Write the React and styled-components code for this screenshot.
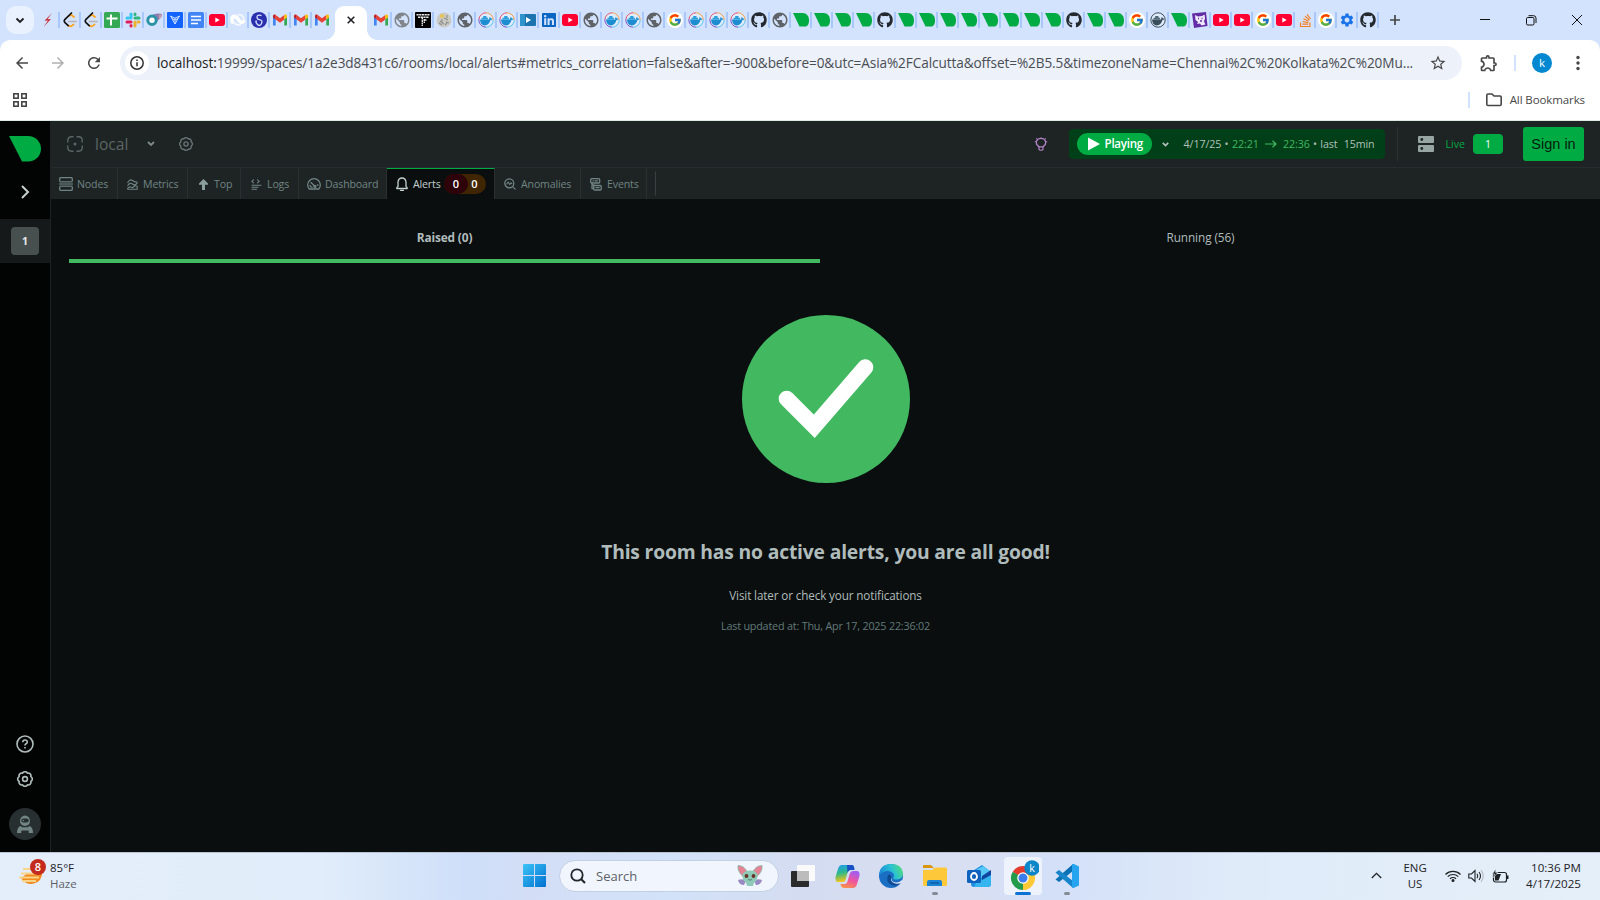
import React from 'react';
import styled, { createGlobalStyle, css } from 'styled-components';
import { FaGithub, FaLinkedin, FaStackOverflow } from 'react-icons/fa';
import { FcGoogle } from 'react-icons/fc';
import { MdSettings, MdOutlineExtension, MdStarBorder, MdRefresh, MdArrowBack, MdArrowForward, MdPublic } from 'react-icons/md';

const Global = createGlobalStyle`
  * { box-sizing: border-box; }
  body { margin: 0; overflow: hidden; font-family: "Open Sans", "Noto Sans", sans-serif; }
  svg { display: block; flex: none; }
`;

const Screen = styled.div`
  width: 1600px; height: 900px; display: flex; flex-direction: column; background: #fff;
`;

const Label = styled.span`
  white-space: nowrap;
  font-size: ${p => p.$size || 11}px;
  font-weight: ${p => p.$weight || 400};
  color: ${p => p.$color || 'inherit'};
  letter-spacing: ${p => p.$track || 0}px;
  margin-left: ${p => p.$ml || 0}px;
  line-height: ${p => p.$lh || 16}px;
`;

/* ---------- browser chrome ---------- */
const TabStrip = styled.div`
  height: 40px; background: #d3e3fd; display: flex; align-items: center; padding-left: 6px; flex: none;
`;
const TabSearch = styled.div`
  width: 28px; height: 28px; border-radius: 10px; background: #e9f1fe; margin-right: 6px;
  display: flex; align-items: center; justify-content: center;
`;
const TabSlot = styled.div`
  display: flex; align-items: center; width: ${p => (p.$first ? 22 : 21)}px; height: 16px; flex: none;
  &::after { content: ''; width: 2px; height: 16px; margin-left: ${p => (p.$first ? 2 : 1)}px; background: ${p => (p.$last ? 'transparent' : '#a8c7fa')}; }
`;
const Fav = styled.div`
  width: 16px; height: 16px; flex: none; display: flex; align-items: center; justify-content: center;
  border-radius: ${p => p.$r || 0}; background: ${p => p.$bg || 'transparent'}; color: ${p => p.$c || '#24292f'};
`;
const ActiveTab = styled.div`
  width: 32px; height: 34px; margin: 6px 6px 0 0; background: #fff; border-radius: 9px 9px 0 0; position: relative;
  display: flex; align-items: center; justify-content: center; padding-bottom: 6px; flex: none;
  &::before, &::after { content: ''; position: absolute; bottom: 0; width: 10px; height: 10px; }
  &::before { left: -10px; background: radial-gradient(circle at 0 0, transparent 9.5px, #fff 10px); }
  &::after { right: -10px; background: radial-gradient(circle at 100% 0, transparent 9.5px, #fff 10px); }
`;
const NewTab = styled.div`
  margin-left: 9px; color: #474747;
`;
const WinButtons = styled.div`
  margin-left: auto; display: flex; align-items: center; gap: 30px; padding-right: 18px;
`;
const Toolbar = styled.div`
  height: 46px; background: #d3e3fd; flex: none;
`;
const ToolbarInner = styled.div`
  height: 46px; background: #fff; border-radius: 10px 10px 0 0; display: flex; align-items: center; padding-left: 12px; color: #474747;
`;
const NavIcon = styled.div`
  width: 20px; height: 20px; margin-right: 16px; color: ${p => (p.$dim ? '#b0b0b0' : '#474747')};
  display: flex; align-items: center; justify-content: center; flex: none;
`;
const Omnibox = styled.div`
  width: 1342px; height: 34px; border-radius: 17px; background: #ecf1fa; display: flex; align-items: center; padding: 0 15px 0 5px; flex: none;
`;
const InfoDot = styled.div`
  width: 24px; height: 24px; border-radius: 50%; background: #fff; display: flex; align-items: center; justify-content: center; flex: none;
`;
const Url = styled.div`
  margin-left: 8px; flex: 1; min-width: 0; font-size: 13.6px; letter-spacing: -0.09px; color: #4a4d52; white-space: nowrap; line-height: 20px;
  b { font-weight: 400; color: #1f1f1f; }
`;
const VBar = styled.div`
  width: ${p => p.$w || 2}px; height: ${p => p.$h || 16}px; background: ${p => p.$c || '#d3e3fd'}; margin: 0 ${p => p.$mr || 0}px 0 ${p => p.$ml || 0}px; flex: none;
`;
const ChromeTail = styled.div`
  display: flex; align-items: center; margin-left: 17px;
`;
const Avatar = styled.div`
  width: 20px; height: 20px; border-radius: 50%; background: #0288d1; color: #fff; font-size: 11.5px; line-height: 19px; text-align: center; margin: 0 16px 0 16px;
`;
const Bookmarks = styled.div`
  height: 35px; flex: none; background: #fff; display: flex; align-items: center; padding: 0 15px 7px 13px; border-bottom: 1px solid #dfe9e4;
`;
const BookmarksRight = styled.div`
  margin-left: auto; display: flex; align-items: center; color: #474747;
`;

/* ---------- application ---------- */
const Page = styled.div`
  flex: 1; display: flex; min-height: 0;
`;
const Sidebar = styled.div`
  width: 51px; background: #020404; border-right: 1px solid #1d2223; display: flex; flex-direction: column; align-items: center;
`;
const SpaceRow = styled.div`
  width: 50px; height: 44px; background: #15191a; display: flex; align-items: center; justify-content: center; margin-top: 18px;
`;
const SpaceBox = styled.div`
  width: 28px; height: 28px; border-radius: 4px; background: #48504f; color: #e4ebeb; font-size: 10.5px; font-weight: 700; line-height: 28px; text-align: center;
`;
const SideFoot = styled.div`
  margin-top: auto; display: flex; flex-direction: column; align-items: center; padding-bottom: 12px;
`;
const FootCog = styled.div`
  color: #b0bcbb; margin-top: 18px;
`;
const UserDot = styled.div`
  width: 32px; height: 32px; border-radius: 50%; background: #282f30; display: flex; align-items: center; justify-content: center; margin-top: 21px;
`;
const Main = styled.div`
  flex: 1; background: #0a0e0f; display: flex; flex-direction: column;
`;
const Header = styled.div`
  height: 47px; background: #1e2323; border-bottom: 1px solid #272d2e; display: flex; align-items: center; padding: 0 16px 0 16px; flex: none;
`;
const Spring = styled.div`flex: 1;`;
const HeaderCog = styled.div`
  color: #6b7776; margin-left: 24px;
`;
const PlayBar = styled.div`
  width: 316px; height: 30px; border-radius: 4px; background: #003f17; display: flex; align-items: center; padding-left: 8px; margin-left: 21px; flex: none;
`;
const PlayPill = styled.div`
  width: 75px; height: 22px; border-radius: 11px; background: #00ab44; display: flex; align-items: center; padding-left: 11px; color: #fff; flex: none;
`;
const TimeText = styled.div`
  width: 191px; margin-left: 15px; display: flex; justify-content: space-between; align-items: center; font-size: 10.7px; letter-spacing: -0.1px; word-spacing: 0.7px; color: #b4c0bd; white-space: pre;
  i { font-style: normal; color: #42b861; }
`;
const LiveBadge = styled.div`
  width: 30px; height: 20px; border-radius: 4px; background: #00ab44; color: #fff; font-size: 10.5px; line-height: 20px; text-align: center; margin-left: 8px;
`;
const SignIn = styled.div`
  width: 61px; height: 34px; border-radius: 3px; background: #00ab44; color: #061b0d; font: 14.5px/34px "Liberation Sans", Arial, sans-serif; text-align: center; margin-left: 20px;
`;
const NavRow = styled.div`
  height: 31px; background: #1e2323; display: flex; flex: none;
`;
const NavTab = styled.div`
  width: ${p => p.$w}px; padding-left: ${p => p.$pl}px; height: 31px; display: flex; align-items: center; padding-top: 1px; border-right: 1px solid #2a3031;
  color: #708584; flex: none;
  ${p => p.$active && css`background: #0a0e0f; color: #c5d0cf; border-top: 1px solid #00ab44; padding-top: 0;`}
`;
const NavIco = styled.div`
  width: ${p => p.$w}px; margin-right: ${p => p.$gap}px; display: flex; flex: none;
`;
const Badges = styled.div`
  display: flex; width: 42px; height: 20px; border-radius: 10px; background: #3f2502; margin-left: auto; margin-right: 8px; color: #fff; font-size: 11px; font-weight: 600; line-height: 20px;
`;
const RedBadge = styled.div`
  width: 24px; height: 20px; border-radius: 10px; background: #2d0309; text-align: center;
`;
const AmberBadge = styled.div`width: 13px; text-align: center;`;
const AlertTabs = styled.div`
  display: flex; height: 47px; margin: 17px 19px 0 18px; flex: none;
`;
const AlertTab = styled.div`
  width: ${p => p.$w}px; height: 47px; display: flex; justify-content: center; padding-top: 13px; color: #b0bcbb;
  border-bottom: 4px solid ${p => (p.$active ? '#42b861' : 'transparent')};
`;
const Empty = styled.div`
  display: flex; flex-direction: column; align-items: center; margin-top: 52px;
`;
const EmptyTitle = styled.h2`
  margin: 55px 0 0; font-size: 19.3px; font-weight: 700; line-height: 28px; letter-spacing: -0.17px; color: #b0bcbb;
`;
const EmptyNote = styled.div`
  margin-top: 21px; display: flex; font-size: 11.7px; line-height: 16px; letter-spacing: -0.13px; color: #b0bcbb;
`;
const EmptyTime = styled.div`
  margin-top: 15px; display: flex; font-size: 10.8px; line-height: 16px; letter-spacing: -0.2px; color: #637a79;
`;

/* ---------- taskbar ---------- */
const Taskbar = styled.div`
  height: 48px; flex: none; display: flex; align-items: center; border-top: 1px solid #b9c3d2; padding-bottom: 2px;
  background: linear-gradient(90deg, #e4eefa 0%, #e1edfa 20%, #cfdff9 29%, #d3def6 33%, #d2e2f8 42%, #d4dcf1 50%, #d9dff2 60%, #d3e0f8 66%, #dfebf9 77%, #e5eff9 100%);
`;
const Weather = styled.div`
  display: flex; align-items: center; width: 523px; padding-left: 18px;
`;
const Stack = styled.div`
  display: flex; flex-direction: column; align-items: ${p => p.$align || 'flex-start'}; color: #1d2126;
`;
const SearchBox = styled.div`
  width: 220px; height: 32px; border-radius: 16px; background: #f1f5fd; border: 1px solid #c3cfe4; display: flex; align-items: center; padding: 0 15px 0 10px; margin-left: 13px;
`;
const Apps = styled.div`display: flex; align-items: center; margin-left: 2px;`;
const AppSlot = styled.div`
  width: 38px; height: 38px; border-radius: 4px; margin: 1px 3px 0; position: relative; display: flex; align-items: center; justify-content: center;
  background: ${p => (p.$on ? '#edf2fb' : 'transparent')};
  &::after { content: ''; display: ${p => (p.$bar ? 'block' : 'none')}; position: absolute; bottom: 0; left: ${p => (38 - p.$bar) / 2}px; width: ${p => p.$bar}px; height: 3px; border-radius: 2px; background: ${p => (p.$on ? '#0a74d4' : '#868c97')}; }
`;
const Tray = styled.div`
  margin-left: auto; display: flex; align-items: center; padding-right: 19px; color: #1d2126;
`;
const TrayCell = styled.div`
  display: flex; justify-content: center; width: ${p => (p.$w ? p.$w + 'px' : 'auto')}; margin-left: ${p => p.$ml || 0}px;
`;

/* ---------- drawings ---------- */
const Gmail = () => (
  <svg width="16" height="16" viewBox="0 0 16 16">
    <path d="M1 13.5h2.7V7.3L1 4z" fill="#4285f4" /><path d="M12.3 13.5H15V4l-2.7 3.3z" fill="#34a853" />
    <path d="M3.7 3v4.6L8 10.8l4.3-3.2V3L8 6.3z" fill="#ea4335" />
    <path d="M1 4v1.6l2.7 2V3C2.6 2.1 1 2.7 1 4z" fill="#c5221f" /><path d="M15 4v1.6l-2.7 2V3c1.1-.9 2.7-.3 2.7 1z" fill="#fbbc04" />
  </svg>
);
const Netdata = ({ w = 16, h = 13.5 }) => (
  <svg width={w} height={h} viewBox="0 0 32 26" preserveAspectRatio="none"><path d="M0 0h19C27.500 0 32 6.500 32 14S29.500 26 24 26H13z" fill="#00ab44" /></svg>
);
const YouTube = () => (
  <svg width="16" height="12" viewBox="0 0 16 12"><rect width="16" height="12" rx="3" fill="#f03" /><path d="M6.3 3.500v5L10.700 6z" fill="#fff" /></svg>
);
const Leet = () => (
  <svg width="16" height="16" viewBox="0 0 16 16" fill="none" strokeWidth="1.7" strokeLinecap="round">
    <path d="M6.500 9.500H14" stroke="#b3b3b3" /><path d="M12 5L9.800 3.300Q8 2.500 7 4" stroke="#ffa116" /><path d="M11.700 12.300Q9 15.500 6.500 13.500" stroke="#ffa116" />
    <path d="M9.500 1L3 7.300Q1.500 9 3 10.600l3.200 3" stroke="#111" />
  </svg>
);
const Docker = ({ grey }) => (
  <svg width="16" height="16" viewBox="0 0 16 16">
    <circle cx="8" cy="8" r="7.3" fill="#e0ebfb" />
    <path d="M1 7A7.200 7.200 0 0 1 8 .8" fill="none" stroke={grey ? '#394d5c' : '#e5506c'} />
    <path d="M8 .8A7.200 7.200 0 0 1 15.200 8" fill="none" stroke={grey ? '#394d5c' : '#f5a04a'} />
    <path d="M15.200 8A7.200 7.200 0 0 1 8 15.200" fill="none" stroke={grey ? '#394d5c' : '#5bc4ee'} />
    <path d="M8 15.200A7.200 7.200 0 0 1 .9 7" fill="none" stroke={grey ? '#394d5c' : '#7a52c7'} />
    <path d="M2 7.500h9.300q-.6-1.500.5-2.600 1 .7 1 1.700 1-.2 1.700.2-.5 1.200-2 1.300Q11 13.500 6.800 13.500 2.300 13 2 7.500z" fill={grey ? '#394d5c' : '#1b8dd0'} />
    <path d="M3.500 5.700h6.500v1.900H3.500zM5.200 4h3.300v1.800H5.200z" fill={grey ? '#50687a' : '#2a9fdd'} />
  </svg>
);
const Slack = () => (
  <svg width="16" height="16" viewBox="0 0 16 16" strokeWidth="3" strokeLinecap="round">
    <path d="M6 2v4" stroke="#36c5f0" /><path d="M2 6h1.500" stroke="#36c5f0" /><path d="M10 6h4" stroke="#2eb67d" /><path d="M10 2v.5" stroke="#2eb67d" />
    <path d="M10 10v4" stroke="#ecb22e" /><path d="M13 10h1" stroke="#ecb22e" /><path d="M2 10h4" stroke="#e01e5a" /><path d="M6 13.500v.5" stroke="#e01e5a" />
  </svg>
);
const Svg16 = ({ children }) => <svg width="16" height="16" viewBox="0 0 16 16">{children}</svg>;

const FAVS = {
  bolt: () => <Svg16><path d="M12 1L4.500 8.800l3.500-.4L3.500 15 11 7l-3.500.3z" fill="#c62a36" /></Svg16>,
  leet: () => <Leet />,
  sheet: () => <Svg16><rect width="16" height="16" rx="1.5" fill="#34a853" /><path d="M7 2.500v11M2.500 6.500h11" stroke="#fff" strokeWidth="2" /></Svg16>,
  slack: () => <Slack />,
  swirl: () => <Svg16><path d="M7 2.500q5-1.500 9-.5 0 3-4 6.500-3 3-4 4z" fill="#8e7fb3" /><path d="M13 3l3-.8q0 3-3 5z" fill="#c99aa8" /><circle cx="6" cy="8.300" r="4.2" fill="#fff" stroke="#2a93a6" strokeWidth="3" /></Svg16>,
  blueV: () => <Svg16><rect width="16" height="16" rx="1" fill="#1263ff" /><path d="M3.500 4L8 12l4.500-8L8 6.200zM8 6.200V12M5 6.500l3 1.500 3-1.500" fill="none" stroke="#cfe0ff" /></Svg16>,
  doc: () => <Svg16><rect width="16" height="16" rx="1.5" fill="#4285f4" /><path d="M3 4.500h10M3 8h10M3 11.500h7" stroke="#fff" strokeWidth="1.7" /></Svg16>,
  yt: () => <YouTube />,
  wave: () => <Svg16><path d="M2.500 10Q1 3.500 5 4.500q2.500 1 4 4t4.500 1" fill="none" stroke="#fff" strokeWidth="3.6" strokeLinecap="round" /><path d="M7.500 3Q13 1.500 14 8M2.500 9Q6 14 11 12.500" fill="none" stroke="#f4f8ff" strokeWidth="1.6" /></Svg16>,
  orb: () => <Svg16><circle cx="8" cy="8" r="8" fill="#2a2fae" /><path d="M10.500 3.500Q6 2.500 6 5t3 2.800 1.500 3.700-4 1-1-4" fill="none" stroke="#d5ddff" strokeWidth="1.3" /></Svg16>,
  gmail: () => <Gmail />,
  globeL: () => <MdPublic size={18} />,
  globe: () => <MdPublic size={18} />,
  tf: () => <Svg16><rect width="16" height="16" rx="1" fill="#000" /><path d="M1.500 2.800h13M3 5.200h11M7.300 5v9M9.300 7v4M9 8h3" stroke="#e8e8e8" strokeWidth="1.4" strokeDasharray="2.2 .5" /></Svg16>,
  moon: () => <Svg16><circle cx="8" cy="8" r="7.5" fill="#c9c9c6" /><path d="M4 9l4 3M10 10l3 1M6 7v3M11 3v3M8 6l4 2M3 11l3 2M9 13l2-2" stroke="#8f8f8c" strokeWidth="1.1" /><circle cx="6" cy="4" r="2" fill="#eac24f" /></Svg16>,
  docker: () => <Docker />,
  dockerG: () => <Docker grey />,
  play: () => <Svg16><rect y="2" width="16" height="12" rx="1" fill="#1b74ae" /><path d="M0 3q0-1 1-1h4v12H1q-1 0-1-1z" fill="#2f94cc" /><path d="M6 5v6l5-3z" fill="#fff" /></Svg16>,
  linkedin: () => <FaLinkedin size={16} />,
  google: () => <FcGoogle size={14} />,
  github: () => <FaGithub size={16} />,
  net: () => <Netdata />,
  dd: () => <Svg16><path d="M0 1.500L14 0l1.500 14L2 16z" fill="#632ca6" /><path d="M3 3l3 1.500 4-.5 2.500-1.500.5 4-1 3 1.500 3-4 1-1.500-2-3 .5L6 10 3.500 8z" fill="#efe7fa" /><path d="M6 6.500h1M9.500 6.500h1M8 9h2" stroke="#632ca6" strokeWidth="1.3" /></Svg16>,
  so: () => <FaStackOverflow size={15} />,
  gear: () => <MdSettings size={16} />,
};
const FAV_STYLE = {
  linkedin: { $c: '#0a66c2' }, google: { $bg: '#fff', $r: '50%' }, so: { $c: '#f48024' }, gear: { $c: '#1a73e8' },
  globe: { $c: '#5f6368' }, globeL: { $c: '#80868b' },
};
const LEFT_TABS = ['bolt', 'leet', 'leet', 'sheet', 'slack', 'swirl', 'blueV', 'doc', 'yt', 'wave', 'orb', 'gmail', 'gmail', 'gmail'];
const RIGHT_TABS = ('gmail globeL tf moon globe docker docker play linkedin yt globe docker docker globe google docker docker docker github globe '
  + 'net net net net github net net net net net net net net github net net google dockerG net dd yt yt google yt so google gear github').split(' ');

const TabIcon = ({ kind, ...rest }) => (
  <TabSlot {...rest}><Fav {...(FAV_STYLE[kind] || {})}>{FAVS[kind]()}</Fav></TabSlot>
);

const Line = ({ w = 16, h, vb, sw = 1.3, children }) => (
  <svg width={w} height={h || w} viewBox={vb || `0 0 ${w} ${h || w}`} fill="none" stroke="currentColor" strokeWidth={sw} strokeLinecap="round" strokeLinejoin="round">{children}</svg>
);

/* Eight-lobed ring used by the settings buttons. */
const COG_PATH = (() => {
  const pt = i => {
    const a = (Math.PI / 4) * i + Math.PI / 8;
    return `${(8 + 6.3 * Math.cos(a)).toFixed(2)} ${(8 + 6.3 * Math.sin(a)).toFixed(2)}`;
  };
  let d = `M${pt(0)}`;
  for (let i = 1; i <= 8; i += 1) d += `A2.700 2.700 0 0 1 ${pt(i)}`;
  return `${d}z`;
})();
const Cog = ({ size = 14, sw = 1.4 }) => (
  <Line w={size} vb="0 0 16 16" sw={sw}><path d={COG_PATH} /><circle cx="8" cy="8" r="2.4" /></Line>
);
const ICONS = {
  nodes: <Line w={14}><path d="M.7 4V1.700q0-1 1-1h10.600q1 0 1 1V4M.7 10v2.300q0 1 1 1h10.600q1 0 1-1V10" /><path d="M1.500 4.800h11M1.500 9.200h11" strokeWidth="1.1" /><path d="M1 7h12" strokeWidth="2.8" opacity=".55" /></Line>,
  metrics: <Line w={11} h={11}><path d="M.8 3.500Q3-.5 5.500 1.500T10.200 3M.8 6.500q2.200-3.500 4.700-1.500t4.700-.8M.8 10.300h9.400V7.200L8 6.700 5.500 8.700 3 7.700.8 9z" strokeWidth="1.1" /></Line>,
  top: <svg width="9" height="11" viewBox="0 0 9 11"><path d="M4.500 0L9 4.500v1.200H6V11H3V5.700H0V4.500z" fill="#8a9e9c" /></svg>,
  logs: <Line w={11}><path d="M2.500.8L.8 2.300l1.700 1.500M6.500.8l1.700 1.500-1.700 1.500M1 6.300h9M1 8.300h6M1 10.300h4.500" strokeWidth="1.1" /></Line>,
  dash: <Line w={14} h={12}><path d="M2.200 11Q.7 9.300.7 7a6.300 6.300 0 0 1 12.600 0q0 2.300-1.500 4zM4 4.500L7.500 8M3 7.500q.5 1.500 2 1.800M10.500 7h.5" /><circle cx="8" cy="8.400" r="1" /></Line>,
  bell: <Line w={12} h={14}><path d="M.8 11.500h10.400q.3-1-1.200-2V5Q9.500 1 6 1T2 5v4.500q-1.500 1-1.200 2zM4.500 13.300h3" /></Line>,
  anom: <Line w={12} h={12}><circle cx="5.300" cy="5.300" r="4.5" /><path d="M8.700 8.700l2.500 2.500M2.800 6l1.400-2 1.500 2.500L7 4.800l.8.8" strokeWidth="1.1" /></Line>,
  events: <Line w={12} h={13}><rect x=".7" y=".7" width="9" height="4.3" rx="1" /><path d="M3 2.800h.3M5 2.800h2.500M2 5v5.500h1.500M2 7h2" /><rect x="3.7" y="7.5" width="7.5" height="4.5" rx="1" /><path d="M6 9.700h3" /></Line>,
};

const NAV = [
  { k: 'nodes', t: 'Nodes', w: 67, pl: 8, iw: 14, g: 4 },
  { k: 'metrics', t: 'Metrics', w: 70, pl: 9, iw: 11, g: 5 },
  { k: 'top', t: 'Top', w: 53, pl: 11, iw: 9, g: 6 },
  { k: 'logs', t: 'Logs', w: 58, pl: 10, iw: 11, g: 5 },
  { k: 'dash', t: 'Dashboard', w: 88, pl: 8, iw: 14, g: 4 },
  { k: 'bell', t: 'Alerts', w: 108, pl: 9, iw: 12, g: 5, active: true },
  { k: 'anom', t: 'Anomalies', w: 86, pl: 9, iw: 12, g: 5 },
  { k: 'events', t: 'Events', w: 66, pl: 9, iw: 12, g: 5 },
];

const Dark = '#202124';

export default function App() {
  return (
    <Screen>
      <Global />
      <TabStrip>
        <TabSearch><svg width="10" height="7" viewBox="0 0 10 7"><path d="M1.500 1.500L5 5l3.500-3.500" fill="none" stroke={Dark} strokeWidth="1.9" /></svg></TabSearch>
        {LEFT_TABS.map((k, i) => <TabIcon key={i} kind={k} $first={i === 0} $last={i === LEFT_TABS.length - 1} />)}
        <ActiveTab><svg width="8" height="8" viewBox="0 0 8 8"><path d="M.7.7l6.600 6.600M7.300.7L.7 7.300" stroke={Dark} strokeWidth="1.6" /></svg></ActiveTab>
        {RIGHT_TABS.map((k, i) => <TabIcon key={i} kind={k} />)}
        <NewTab><svg width="10" height="10" viewBox="0 0 10 10"><path d="M5 0v10M0 5h10" stroke="currentColor" strokeWidth="1.7" /></svg></NewTab>
        <WinButtons>
          <svg width="10" height="10" viewBox="0 0 10 10"><path d="M0 4.500h10" stroke="#111" /></svg>
          <svg width="22" height="11" viewBox="-6 0 22 11" fill="none" stroke="#111"><rect x=".5" y="2.500" width="7.5" height="7.5" rx="1.2" /><path d="M2.500.7h5q2.500 0 2.500 2.500v4.800" /></svg>
          <svg width="10" height="10" viewBox="0 0 10 10"><path d="M0 0l10 10M10 0L0 10" stroke="#111" /></svg>
        </WinButtons>
      </TabStrip>
      <Toolbar>
        <ToolbarInner>
          <NavIcon><MdArrowBack size={18} /></NavIcon>
          <NavIcon $dim><MdArrowForward size={18} /></NavIcon>
          <NavIcon><MdRefresh size={18} /></NavIcon>
          <Omnibox>
            <InfoDot><svg width="14" height="14" viewBox="0 0 14 14"><circle cx="7" cy="7" r="6.2" fill="none" stroke="#333" strokeWidth="1.5" /><path d="M7 6.200v4M7 3.500v1.500" stroke="#333" strokeWidth="1.5" /></svg></InfoDot>
            <Url><b>localhost:</b>19999/spaces/1a2e3d8431c6/rooms/local/alerts#metrics_correlation=false&amp;after=-900&amp;before=0&amp;utc=Asia%2FCalcutta&amp;offset=%2B5.5&amp;timezoneName=Chennai%2C%20Kolkata%2C%20Mu...</Url>
            <MdStarBorder size={18} />
          </Omnibox>
          <ChromeTail>
            <MdOutlineExtension size={20} />
            <VBar $ml={15} />
            <Avatar>k</Avatar>
            <svg width="20" height="16" viewBox="0 0 20 16"><circle cx="10" cy="2.500" r="1.7" fill="#474747" /><circle cx="10" cy="8" r="1.7" fill="#474747" /><circle cx="10" cy="13.500" r="1.7" fill="#474747" /></svg>
          </ChromeTail>
        </ToolbarInner>
      </Toolbar>
      <Bookmarks>
        <svg width="14" height="14" viewBox="0 0 14 14" fill="none" stroke="#474747" strokeWidth="1.6"><rect x=".8" y=".8" width="4.4" height="4.4" /><rect x="8.800" y=".8" width="4.4" height="4.4" /><rect x=".8" y="8.800" width="4.4" height="4.4" /><rect x="8.800" y="8.800" width="4.4" height="4.4" /></svg>
        <BookmarksRight>
          <VBar $mr={16} />
          <svg width="24" height="14" viewBox="0 0 24 14"><path d="M.8 11.500V2.300Q.8 1 2 1h4l2 2h6q1.200 0 1.200 1.200v7q0 1.300-1.200 1.300H2q-1.200 0-1.200-1z" fill="none" stroke="#474747" strokeWidth="1.6" /></svg>
          <Label $size={11.5} $track={-0.1}>All Bookmarks</Label>
        </BookmarksRight>
      </Bookmarks>

      <Page>
        <Sidebar>
          <svg width="32" height="56" viewBox="0 -15 32 56"><path d="M0 0h19C26.500 0 32 5.800 32 12.800S26.500 25.600 19 25.600h-6z" fill="#00ab44" /></svg>
          <svg width="10" height="24" viewBox="0 0 10 24"><path d="M2 9l6 6-6 6" fill="none" stroke="#c5d0cf" strokeWidth="2" /></svg>
          <SpaceRow><SpaceBox>1</SpaceBox></SpaceRow>
          <SideFoot>
            <svg width="18" height="18" viewBox="0 0 18 18" fill="none" stroke="#b0bcbb" strokeWidth="1.6"><circle cx="9" cy="9" r="8" /><path d="M6.700 7.300Q6.800 5 9 5t2.300 2q0 1.100-1.200 1.700T9 10.500M9 12v1.600" /></svg>
            <FootCog><Cog size={16} sw={1.6} /></FootCog>
            <UserDot><svg width="16" height="18" viewBox="0 0 16 18" fill="#708584"><path d="M3 6a5 5.500 0 0 1 10 0q0 4.500-5 5-5-.5-5-5z" /><rect x="4.300" y="3.500" width="7.4" height="4" rx="2" fill="#282f30" /><circle cx="6.300" cy="5.500" r=".8" /><path d="M3 11l2.500 1.300h5L13 11q3 2 3 7h-4.300v-2.500H4.300V18H0q0-5 3-7z" /></svg></UserDot>
          </SideFoot>
        </Sidebar>
        <Main>
          <Header>
            <svg width="16" height="16" viewBox="0 0 16 16" fill="none" stroke="#5b6666" strokeWidth="1.4"><path d="M6.500.8H4.500Q.8.800.8 4.500V6.500M9.500.8h2q3.700 0 3.700 3.700v2M.8 9.500v2q0 3.700 3.700 3.700h2M15.200 9.500v2q0 3.700-3.700 3.700h-2" /><circle cx="8" cy="8" r=".8" /></svg>
            <Label $size={15.6} $ml={12} $color="#5b6666" $lh={20}>local</Label>
            <svg width="27" height="6" viewBox="-19 0 27 6"><path d="M1 1L4 3.900 7 1" fill="none" stroke="#7c8988" strokeWidth="1.9" /></svg>
            <HeaderCog><Cog size={14} sw={1.5} /></HeaderCog>
            <Spring />
            <svg width="14" height="14" viewBox="0 0 14 14" fill="none" stroke="#b586cc" strokeWidth="1.3"><path d="M7 1.200l3.200 1 1.600 2.500-.5 2.800L9 9.800H5L2.700 7.500l-.5-2.800 1.600-2.500z" /><path d="M5 10v2.500l1 .8h2l1-.8V10M.8 4.700h1M12.200 4.700h1M2.300 1.300l.7.7M11.700 1.300l-.7.7" strokeWidth="1.1" /></svg>
            <PlayBar>
              <PlayPill><svg width="12" height="14" viewBox="0 0 12 14"><path d="M0 .5v13L12 7z" fill="#fff" /></svg><Label $size={11.6} $weight={600} $ml={5} $track={-0.27} $lh={18}>Playing</Label></PlayPill>
              <svg width="17" height="5" viewBox="-10 0 17 5"><path d="M.8.800l2.700 2.700L6.200.8" fill="none" stroke="#b4c0bd" strokeWidth="1.7" /></svg>
              <TimeText><span>4/17/25 • <i>22:21</i></span><svg width="12" height="8" viewBox="0 0 12 8"><path d="M0 4h11M7.500.800L11 4 7.500 7.200" fill="none" stroke="#42b861" strokeWidth="1.2" /></svg><span><i>22:36</i> • last</span><span>15min</span></TimeText>
            </PlayBar>
            <VBar $w={1} $h={34} $c="#2b3132" $ml={12} $mr={20} />
            <svg width="16" height="16" viewBox="0 0 16 16"><rect width="16" height="7" rx="1" fill="#97a5a3" /><rect y="9" width="16" height="7" rx="1" fill="#97a5a3" /><circle cx="3.800" cy="3.500" r="1.4" fill="#1e2323" /><circle cx="3.800" cy="12.500" r="1.4" fill="#1e2323" /></svg>
            <Label $size={10.6} $ml={12} $color="#00ab44">Live</Label>
            <LiveBadge>1</LiveBadge>
            <SignIn>Sign in</SignIn>
          </Header>
          <NavRow>
            {NAV.map(n => (
              <NavTab key={n.k} $w={n.w} $pl={n.pl} $active={n.active}>
                <NavIco $w={n.iw} $gap={n.g}>{ICONS[n.k]}</NavIco>
                <Label $size={10.6} $track={-0.15}>{n.t}</Label>
                {n.active && <Badges><RedBadge>0</RedBadge><AmberBadge>0</AmberBadge></Badges>}
              </NavTab>
            ))}
            <svg width="10" height="31" viewBox="0 0 10 31"><path d="M8.500 3.500v24" stroke="#394041" /></svg>
          </NavRow>
          <AlertTabs>
            <AlertTab $w={751} $active><Label $size={11.9} $weight={700} $track={-0.15}>Raised (0)</Label></AlertTab>
            <AlertTab $w={761}><Label $size={11.8} $track={-0.1}>Running (56)</Label></AlertTab>
          </AlertTabs>
          <Empty>
            <svg width="168" height="168" viewBox="0 0 168 168"><circle cx="84" cy="84" r="84" fill="#42b861" /><path d="M44.700 83.700L72.300 111.300 123.300 52.300" fill="none" stroke="#fff" strokeWidth="16" strokeLinecap="round" strokeMiterlimit="10" /></svg>
            <EmptyTitle>This room has no active alerts, you are all good!</EmptyTitle>
            <EmptyNote>Visit later or check your notifications</EmptyNote>
            <EmptyTime>Last updated at: Thu, Apr 17, 2025 22:36:02</EmptyTime>
          </Empty>
        </Main>
      </Page>

      <Taskbar>
        <Weather>
          <svg width="32" height="34" viewBox="0 0 32 34">
            <path d="M3 19a11 10 0 0 0 21-5L10 14z" fill="#f28a1c" /><path d="M5 10h9M3 14.500h16M1 18.500h20M4 22h14" stroke="#f8d48a" strokeWidth="2" />
            <circle cx="20" cy="8" r="8" fill="#c42b1c" /><text x="20" y="12" textAnchor="middle" fontSize="11" fontWeight="600" fill="#fff">8</text>
          </svg>
          <Stack><Label $size={11.5}>85°F</Label><Label $size={11.5} $color="#5c6168">Haze</Label></Stack>
        </Weather>
        <svg width="23" height="23" viewBox="0 0 23 23"><defs><linearGradient id="win" x1="0" y1="0" x2="1" y2="1"><stop offset="0" stopColor="#3cc4f7" /><stop offset="1" stopColor="#0070d0" /></linearGradient></defs><path d="M0 1q0-1 1-1h10v11H0zM12 0h10q1 0 1 1v10H12zM0 12h11v11H1q-1 0-1-1zM12 12h11v10q0 1-1 1H12z" fill="url(#win)" /></svg>
        <SearchBox>
          <svg width="16" height="16" viewBox="0 0 16 16" fill="none" stroke="#23272b" strokeWidth="1.8"><circle cx="7" cy="7" r="5.7" /><path d="M11 11l4 4" strokeWidth="2.2" /></svg>
          <Label $size={13} $ml={10} $color="#5d6269">Search</Label><Spring />
          <svg width="26" height="22" viewBox="0 0 26 22"><path d="M1 15q5-2 8 1l-2 4q-5 0-6-5zM25 15q-5-2-8 1l2 4q5 0 6-5z" fill="#9a8ac4" /><path d="M1 .5q6 0 9 6l-4 5Q0 6 1 .5zM25 .5q-6 0-9 6l4 5Q26 6 25 .5z" fill="#e58294" stroke="#86b9ab" strokeWidth=".8" /><path d="M5.500 10q1-4.500 7.500-4.500t7.500 4.500q0 6-3.500 7.500L16 21h-6l-1-3.500Q5.500 16 5.500 10z" fill="#8fc9b8" /><circle cx="9.500" cy="11" r="1.9" fill="#6a3328" /><circle cx="16.500" cy="11" r="1.9" fill="#6a3328" /><path d="M11 14.500q2 1.200 4 0" fill="none" stroke="#557f77" /></svg>
        </SearchBox>
        <Apps>
          <AppSlot><svg width="24" height="22" viewBox="0 0 24 22"><rect y="6" width="18" height="16" rx="1" fill="#2b2b2b" /><rect x="6" y="0" width="18" height="16" rx="1" fill="#fafafa" /><path d="M6 6h12v10H6z" fill="#bcbcbc" /></svg></AppSlot>
          <AppSlot><svg width="25" height="23" viewBox="0 0 25 23"><defs><linearGradient id="ca" x1="0" y1="0" x2=".2" y2="1"><stop offset="0" stopColor="#1f9bf0" /><stop offset=".5" stopColor="#2cb98a" /><stop offset="1" stopColor="#f5c518" /></linearGradient><linearGradient id="cb" x1=".6" y1="0" x2=".2" y2="1"><stop offset="0" stopColor="#a35cf0" /><stop offset=".5" stopColor="#f0569a" /><stop offset="1" stopColor="#f9954a" /></linearGradient></defs><path d="M7 0h10q2 0 2.500 4h-4Q13.500 4 12.500 8l-2 7q-.5 2-3 2H3Q0 17 .5 12L3 4Q4 0 7 0z" fill="url(#ca)" /><path d="M18 23H9q-3 0-3.500-4h4q2.500 0 3.300-3.500l2-7Q15.500 6 18 6h4q3 0 2.500 5L22 19q-1 4-4 4z" fill="url(#cb)" /><path d="M12 0h5q2 0 2.500 5h-4q-2 0-3 3z" fill="#1750c4" /></svg></AppSlot>
          <AppSlot><svg width="24" height="24" viewBox="0 0 24 24"><defs><linearGradient id="ea" x1="0" y1=".3" x2="1" y2="0"><stop offset="0" stopColor="#1c8fd8" /><stop offset=".5" stopColor="#2bc3d2" /><stop offset="1" stopColor="#5be06a" /></linearGradient></defs><circle cx="12" cy="12" r="12" fill="#1a6fc4" /><path d="M0 11Q1 0 12 0t12 9q0 6-6 6.500-4 0-4-1.500 2-2 0-5Q8 4 0 11z" fill="url(#ea)" /><path d="M9 11q-3 8 5 10.500 5 .8 8.500-3.500-6 2.500-9.500-.5-2-2-.5-4.500Q12 10 9 11z" fill="#0f4b93" /><path d="M12.500 13q-1 5 4.500 5.500 3 .2 6-2.500l1 1.500-1.500 1.500q-2 1-5 .8-5-1-5.500-4z" fill="#dce3f5" /></svg></AppSlot>
          <AppSlot $bar={6}><svg width="24" height="22" viewBox="0 0 24 22"><path d="M0 1q0-1 1-1h7l3 3h-11z" fill="#d9960f" /><path d="M0 5h9l3-2.500h11q1 0 1 1V20q0 1-1 1H1q-1 0-1-1z" fill="#fdc93b" /><path d="M4 21v-4q0-2 2-2h11q2 0 2 2v4z" fill="#1b83d3" /><path d="M7 18h9" stroke="#0c5ba3" strokeWidth="1.5" /></svg></AppSlot>
          <AppSlot><svg width="24" height="22" viewBox="0 0 24 22"><path d="M4 7L15 0l9 7v12q0 3-3 3H7q-3 0-3-3z" fill="#1a8fe0" /><path d="M9 5l7-4 7 5-9 7z" fill="#57c8f5" /><path d="M24 8L9 18l-2 4h14q3 0 3-3z" fill="#35b5f0" /><path d="M15 11l9-6v5l-9 5z" fill="#1045a0" /><rect y="5" width="14" height="13" rx="1.5" fill="#0f62bd" /><ellipse cx="7" cy="11.500" rx="3" ry="3.5" fill="none" stroke="#fff" strokeWidth="1.8" /></svg></AppSlot>
          <AppSlot $on $bar={16}><svg width="32" height="32" viewBox="0 0 32 32"><path d="M16 18L5.600 12A12 12 0 0 1 26.400 12z" fill="#e33b2e" /><path d="M16 18l10.400-6A12 12 0 0 1 16 30z" fill="#fcc934" /><path d="M16 18v12A12 12 0 0 1 5.600 12z" fill="#249b4a" /><path d="M16 18L11 21 5.600 12z" fill="#249b4a" /><circle cx="16" cy="18" r="5.8" fill="#fff" /><circle cx="16" cy="18" r="4.5" fill="#3b7ded" /><circle cx="25" cy="8" r="7.7" fill="#0b86c9" /><text x="25" y="12" textAnchor="middle" fontSize="10.5" fill="#fff">k</text></svg></AppSlot>
          <AppSlot $bar={6}><svg width="24" height="24" viewBox="0 0 24 24"><path d="M18 0v7L4 18l-3.500-2.500L18 0z" fill="#0b71b5" /><path d="M18 24v-7L4 6 .5 8.500 18 24z" fill="#1785cc" /><path d="M17 0l1.500-.2L24 2.500v19L18.500 24 17 23.500z" fill="#27a4ef" /></svg></AppSlot>
        </Apps>
        <Tray>
          <svg width="11" height="7" viewBox="0 0 11 7"><path d="M.8 6l4.700-4.700L10.200 6" fill="none" stroke="#1d2126" strokeWidth="1.3" /></svg>
          <TrayCell $w={22} $ml={22}><Stack $align="center"><Label $size={11.4}>ENG</Label><Label $size={11.4}>US</Label></Stack></TrayCell>
          <TrayCell $ml={19}><svg width="16" height="13" viewBox="0 0 16 13" fill="none" stroke="#1d2126" strokeWidth="1.2"><path d="M.5 5.500a10.500 10.500 0 0 1 15 0M2.700 7.700a7.500 7.500 0 0 1 10.600 0M5 9.800a4.300 4.300 0 0 1 6 0" /><circle cx="8" cy="11.500" r=".9" fill="#1d2126" /></svg></TrayCell>
          <TrayCell $ml={7}><svg width="16" height="14" viewBox="0 0 16 14" fill="none" stroke="#1d2126" strokeWidth="1.1"><path d="M.8 5h2.700L7 1.500v11L3.500 9H.8zM9 4.800q1.500 2.200 0 4.400M11 3q3 4 0 8" /><path d="M13 1.200q4.500 5.800 0 11.600" stroke="#b5bcc5" /></svg></TrayCell>
          <TrayCell $ml={8}><svg width="17" height="14" viewBox="0 0 17 14"><rect x="1.500" y="3.500" width="13" height="9.5" rx="2" fill="none" stroke="#1d2126" strokeWidth="1.2" /><path d="M3 5h6l-2.500 6.500H3zM15 6.500h1.500v3.500H15z" fill="#1d2126" /><path d="M3.800 0L.3 5h2.200L1.500 8.500 5.800 3.500H3.600z" fill="#1d2126" stroke="#e4eef9" strokeWidth=".6" /></svg></TrayCell>
          <TrayCell $ml={17}><Stack $align="flex-end"><Label $size={11.6}>10:36 PM</Label><Label $size={11.6}>4/17/2025</Label></Stack></TrayCell>
        </Tray>
      </Taskbar>
    </Screen>
  );
}
